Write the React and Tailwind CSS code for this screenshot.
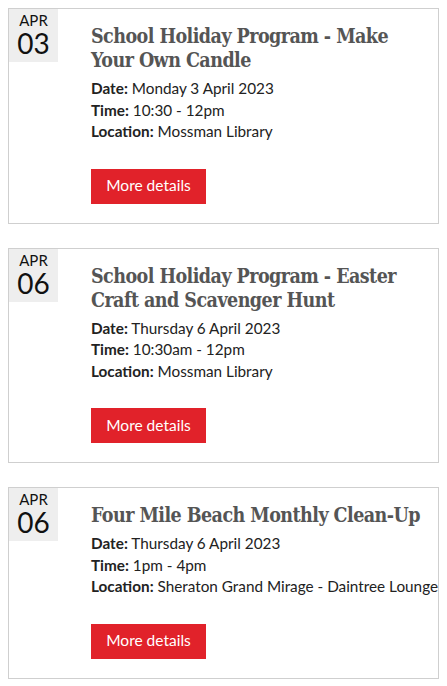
const events = [
  {
    month: "APR",
    day: "03",
    title: "School Holiday Program - Make Your Own Candle",
    date: "Monday 3 April 2023",
    time: "10:30 - 12pm",
    location: "Mossman Library",
  },
  {
    month: "APR",
    day: "06",
    title: "School Holiday Program - Easter Craft and Scavenger Hunt",
    date: "Thursday 6 April 2023",
    time: "10:30am - 12pm",
    location: "Mossman Library",
  },
  {
    month: "APR",
    day: "06",
    title: "Four Mile Beach Monthly Clean-Up",
    date: "Thursday 6 April 2023",
    time: "1pm - 4pm",
    location: "Sheraton Grand Mirage - Daintree Lounge",
  },
];

function EventCard({ event }) {
  return (
    <div className="flex border border-[#cfcfcf] bg-white">
      {/* Date badge */}
      <div className="w-[49px] h-[53px] shrink-0 bg-[#eeeeee] flex flex-col items-center text-[#111] font-['Lato',sans-serif]">
        <span className="text-[15px] leading-[15px] mt-[4px]">{event.month}</span>
        <span className="text-[28px] leading-[28px] mt-[1px]">{event.day}</span>
      </div>

      <div className="pl-[33px] pt-[16px] pb-[19px] flex-1 min-w-0">
        <h3 className="max-w-[336px] font-['DejaVu_Serif_Condensed','DejaVu_Serif',serif] font-bold text-[19.5px] leading-[24px] text-[#555] tracking-[-0.55px]">
          {event.title}
        </h3>

        <div className="mt-[5px] font-['Lato',sans-serif] text-[15.3px] leading-[21.5px] text-[#222] whitespace-nowrap">
          <p><b className="font-bold">Date:</b> {event.date}</p>
          <p><b className="font-bold">Time:</b> {event.time}</p>
          <p><b className="font-bold">Location:</b> {event.location}</p>
        </div>

        <button className="mt-[26px] w-[115px] h-[35px] bg-[#e1222a] text-white font-['Lato',sans-serif] text-[15.5px]">
          More details
        </button>
      </div>
    </div>
  );
}

export default function App() {
  return (
    <div className="w-[447px] min-h-[686px] bg-white px-[8px] pt-[8px] flex flex-col gap-[24px]">
      {events.map((e, i) => (
        <EventCard key={i} event={e} />
      ))}
    </div>
  );
}
